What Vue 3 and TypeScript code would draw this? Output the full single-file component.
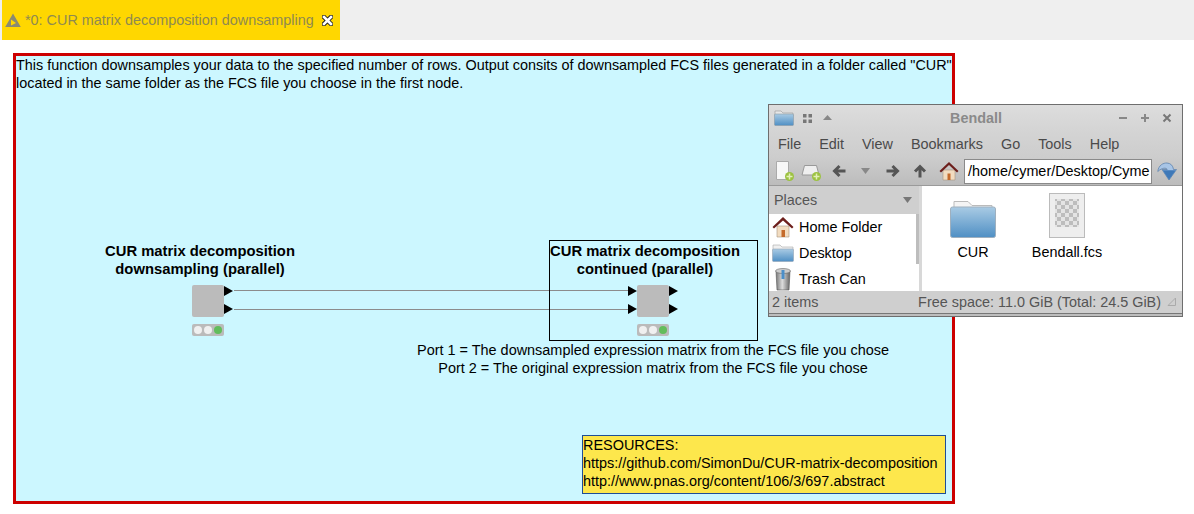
<template>
  <div class="page">
    <div class="tabbar">
      <div class="tab">
        <svg class="tab-icon" width="16" height="14" viewBox="0 0 16 14">
          <path d="M8 .5 15.800 14H.2Z" fill="#8a8a72" />
          <path d="M6 6.500 11 10 6 12.500Z" fill="#ffd700" />
        </svg>
        <span class="tab-title">*0: CUR matrix decomposition downsampling</span>
        <svg class="tab-close" width="11" height="11" viewBox="0 0 11 11">
          <path d="M2 2 9 9M9 2 2 9" stroke="#222" stroke-width="4.500" stroke-linecap="square" />
          <path d="M2 2 9 9M9 2 2 9" stroke="#fff" stroke-width="2.600" stroke-linecap="square" />
        </svg>
      </div>
    </div>

    <div class="canvas">
      <div class="description">
        This function downsamples your data to the specified number of rows. Output consits of downsampled FCS files generated in a folder called "CUR"<br />
        located in the same folder as the FCS file you choose in the first node.
      </div>

      <svg class="wires" width="936" height="445" viewBox="0 0 936 445">
        <path d="M218 234.500H612M218 253.500H612" stroke="#8c8c8c" fill="none" />
      </svg>

      <div class="selection"></div>

      <div class="node-label first">CUR matrix decomposition<br />downsampling (parallel)</div>
      <div class="node-label second">CUR matrix decomposition<br />continued (parallel)</div>

      <div v-for="node in nodes" :key="node.id" class="node" :style="{ left: node.x + 'px', top: node.y + 'px' }">
        <div class="node-box"></div>
        <i v-for="port in node.ports" :key="port.x + '-' + port.y" class="port" :style="{ left: port.x + 'px', top: port.y + 'px' }"></i>
        <div class="lights"><b></b><b></b><b class="on"></b></div>
      </div>

      <div class="ports-note">
        Port 1 = The downsampled expression matrix from the FCS file you chose<br />
        Port 2 = The original expression matrix from the FCS file you chose
      </div>

      <div class="resources">
        RESOURCES:<br />
        https://github.com/SimonDu/CUR-matrix-decomposition<br />
        http://www.pnas.org/content/106/3/697.abstract
      </div>
    </div>

    <div class="window">
      <div class="titlebar">
        <svg class="win-folder" width="20" height="16" viewBox="0 0 20 16">
          <defs>
            <linearGradient id="tbFolder" x1="0" y1="0" x2="0" y2="1">
              <stop offset="0" stop-color="#a9cbe4" />
              <stop offset="1" stop-color="#4f8fc4" />
            </linearGradient>
          </defs>
          <path d="M1 1h6l2 2h10v3H1Z" fill="#e8e8e8" stroke="#999" stroke-width=".6" />
          <rect x="0.500" y="4" width="19" height="11.500" rx="1" fill="url(#tbFolder)" stroke="#8c9aa6" stroke-width=".6" />
        </svg>
        <svg width="9" height="9" viewBox="0 0 9 9" class="win-grip">
          <path d="M0 0h3.500v3.500H0ZM5.500 0H9v3.500H5.500ZM0 5.500h3.500V9H0ZM5.500 5.500H9V9H5.500Z" fill="#777" />
        </svg>
        <svg width="9" height="5" viewBox="0 0 9 5" class="win-up"><path d="M4.500 0 9 5H0Z" fill="#888" /></svg>
        <span class="win-title">Bendall</span>
        <span class="win-btns">
          <svg width="10" height="10" viewBox="0 0 10 10"><path d="M1 5h8" stroke="#888" stroke-width="2" /></svg>
          <svg width="10" height="10" viewBox="0 0 10 10"><path d="M1 5h8M5 1v8" stroke="#888" stroke-width="2" /></svg>
          <svg width="10" height="10" viewBox="0 0 10 10"><path d="M1.500 1.500l7 7M8.500 1.500l-7 7" stroke="#777" stroke-width="2" /></svg>
        </span>
      </div>

      <div class="menubar">
        <span v-for="item in menu" :key="item">{{ item }}</span>
      </div>

      <div class="toolbar">
        <svg width="20" height="22" viewBox="0 0 20 22">
          <path d="M1.500 1.500h12v18h-12Z" fill="#f7f7f7" stroke="#aaa" />
          <circle cx="14.500" cy="16.500" r="4.500" fill="#9cc240" />
          <path d="M14.500 13.500v6M11.500 16.500h6" stroke="#e3f0b8" stroke-width="1.500" />
        </svg>
        <svg width="22" height="22" viewBox="0 0 22 22">
          <path d="M3.500 5.500h12l2.500 9.500h-17Z" fill="#efefef" stroke="#999" />
          <circle cx="15.500" cy="16.500" r="4.500" fill="#9cc240" />
          <path d="M15.500 13.500v6M12.500 16.500h6" stroke="#e3f0b8" stroke-width="1.500" />
        </svg>
        <svg width="14" height="14" viewBox="0 0 14 14"><path d="M7.500 2 2.500 7l5 5M3 7h10.500" fill="none" stroke="#555" stroke-width="3" /></svg>
        <svg width="9" height="6" viewBox="0 0 9 6"><path d="M0 0h9L4.500 6Z" fill="#888" /></svg>
        <svg width="14" height="14" viewBox="0 0 14 14"><path d="M6.500 2l5 5-5 5M11 7H.5" fill="none" stroke="#555" stroke-width="3" /></svg>
        <svg width="14" height="14" viewBox="0 0 14 14"><path d="M2 7.500l5-5 5 5M7 3v10.500" fill="none" stroke="#555" stroke-width="3" /></svg>
        <svg width="20" height="20" viewBox="0 0 20 20">
          <path d="M4 9h12v10H4Z" fill="#f2dcc0" stroke="#a9957c" stroke-width=".6" />
          <path d="M8.500 12.500h3V19h-3Z" fill="#c46a2b" />
          <path d="M0.500 10 10 1l9.500 9-1.500 1.500L10 4l-8 7.500Z" fill="#6d1f1c" />
        </svg>
        <div class="address">/home/cymer/Desktop/Cyme</div>
        <svg class="go-icon" width="20" height="19" viewBox="0 0 20 19">
          <path d="M.8 9.500C1.500 3 6.500.8 10 1c3.500.2 6 2.500 6.500 6.500h3L12 18 5 7.500h5.200C9.500 5.500 5 5.500.8 9.500Z" fill="#a8c5e6" stroke="#5f84ad" stroke-width=".8" />
          <path d="M5.700 8.200h13.100L12 17.800Z" fill="#3f79b8" />
        </svg>
      </div>

      <div class="panes">
        <div class="side">
          <div class="side-head">
            <span>Places</span>
            <svg width="9" height="6" viewBox="0 0 9 6"><path d="M0 0h9L4.500 6Z" fill="#777" /></svg>
          </div>
          <div class="side-list">
            <div class="place">
              <svg width="22" height="22" viewBox="0 0 22 22">
                <path d="M5 10h12v11H5Z" fill="#f2dcc0" stroke="#a9957c" stroke-width=".6" />
                <path d="M9.500 14h3.500v7H9.500Z" fill="#c46a2b" />
                <path d="M0.500 11 11 1l10.500 10L20 12.500 11 4.500 2 12.500Z" fill="#6d1f1c" />
              </svg>
              <span>Home Folder</span>
            </div>
            <div class="place">
              <svg width="22" height="18" viewBox="0 0 22 18">
                <path d="M1 1h7l2 2h11v4H1Z" fill="#f0f0f0" stroke="#aaa" stroke-width=".6" />
                <rect x="0.500" y="5" width="21" height="12.500" rx="1" fill="url(#tbFolder)" stroke="#93a5b5" stroke-width=".6" />
              </svg>
              <span>Desktop</span>
            </div>
            <div class="place">
              <svg width="22" height="24" viewBox="0 0 22 24">
                <defs>
                  <linearGradient id="trash" x1="0" y1="0" x2="1" y2="0">
                    <stop offset="0" stop-color="#777" />
                    <stop offset=".45" stop-color="#ddd" />
                    <stop offset="1" stop-color="#666" />
                  </linearGradient>
                </defs>
                <path d="M4 4h14l-1 19H5Z" fill="url(#trash)" stroke="#555" stroke-width=".6" />
                <ellipse cx="11" cy="4" rx="7.500" ry="2.500" fill="#ccc" stroke="#666" stroke-width=".6" />
                <rect x="9.500" y="3" width="3" height="9" fill="#4c8fc9" />
              </svg>
              <span>Trash Can</span>
            </div>
            <div class="side-scroll"></div>
          </div>
        </div>
        <div class="splitter"></div>
        <div class="files">
          <div class="file">
            <div class="file-icon">
              <svg width="46" height="37" viewBox="0 0 46 37">
                <path d="M4 .5h14l4 4h20v12H4Z" fill="#f4f4f4" stroke="#bbb" />
                <rect x="0.500" y="6" width="45" height="30.500" rx="2" fill="url(#tbFolder)" stroke="#9fb0bf" />
              </svg>
            </div>
            <span>CUR</span>
          </div>
          <div class="file">
            <div class="file-icon">
              <svg width="36" height="45" viewBox="0 0 36 45">
                <defs>
                  <pattern id="check" width="8" height="8" patternUnits="userSpaceOnUse">
                    <rect width="8" height="8" fill="#e4e4e4" />
                    <rect width="4" height="4" fill="#bdbdbd" />
                    <rect x="4" y="4" width="4" height="4" fill="#bdbdbd" />
                  </pattern>
                </defs>
                <rect x="0.500" y="0.500" width="35" height="44" fill="#eeeeee" stroke="#bbb" />
                <rect x="6" y="6" width="24" height="28" fill="url(#check)" />
              </svg>
            </div>
            <span>Bendall.fcs</span>
          </div>
        </div>
      </div>

      <div class="statusbar">
        <span>2 items</span>
        <span class="free">Free space: 11.0 GiB (Total: 24.5 GiB)</span>
        <svg width="9" height="9" viewBox="0 0 9 9"><path d="M8.500 1v7.500H1Z" fill="none" stroke="#aaa" /></svg>
      </div>
      <div class="win-bottom"></div>
    </div>
  </div>
</template>

<script setup lang="ts">
interface Port {
  x: number
  y: number
}

interface WorkflowNode {
  id: string
  x: number
  y: number
  ports: Port[]
}

const menu: string[] = ['File', 'Edit', 'View', 'Bookmarks', 'Go', 'Tools', 'Help']

const nodes: WorkflowNode[] = [
  {
    id: 'downsampling',
    x: 176,
    y: 229,
    ports: [
      { x: 32, y: 1 },
      { x: 32, y: 19 },
    ],
  },
  {
    id: 'continued',
    x: 621,
    y: 229,
    ports: [
      { x: -9, y: 1 },
      { x: -9, y: 19 },
      { x: 32, y: 1 },
      { x: 32, y: 19 },
    ],
  },
]
</script>

<style>
html,
body {
  margin: 0;
  background: #fff;
}
</style>

<style scoped>
.page {
  position: relative;
  width: 1194px;
  height: 514px;
  overflow: hidden;
  background: #fff;
  font-family: "Liberation Sans", Arial, sans-serif;
  color: #000;
}

.tabbar {
  height: 40px;
  background: #efefef;
  padding-left: 2px;
}

.tab {
  width: 338px;
  height: 40px;
  background: #ffd700;
  display: flex;
  align-items: center;
  box-sizing: border-box;
  padding-left: 3px;
}

.tab-title {
  margin-left: 4px;
  font-size: 14.4px;
  color: #8f8a50;
  white-space: nowrap;
}

.tab-close {
  margin-left: 8px;
}

.canvas {
  position: absolute;
  left: 13px;
  top: 53px;
  width: 936px;
  height: 445px;
  border: 3px solid #cc0000;
  background: #ccf7ff;
}

.description {
  position: absolute;
  left: 0;
  top: 0;
  font-size: 14.4px;
  line-height: 18px;
  white-space: nowrap;
}

.wires {
  position: absolute;
  left: 0;
  top: 0;
}

.selection {
  position: absolute;
  left: 533px;
  top: 184px;
  width: 207px;
  height: 99px;
  border: 1px solid #000;
}

.node-label {
  position: absolute;
  width: 220px;
  font-size: 14.8px;
  font-weight: 700;
  line-height: 18px;
  text-align: center;
  white-space: nowrap;
}

.node-label.first {
  left: 74px;
  top: 186px;
}

.node-label.second {
  left: 519px;
  top: 186px;
}

.node {
  position: absolute;
  width: 32px;
  height: 52px;
}

.node-box {
  width: 32px;
  height: 32px;
  border-radius: 2px;
  background: #bbbbbb;
}

.port {
  position: absolute;
  width: 0;
  height: 0;
  border-left: 9px solid #000;
  border-top: 5px solid transparent;
  border-bottom: 5px solid transparent;
}

.lights {
  display: flex;
  align-items: center;
  gap: 2px;
  width: 32px;
  height: 12px;
  margin-top: 7px;
  padding-left: 2px;
  box-sizing: border-box;
  border-radius: 2px;
  background: #bbbbbb;
}

.lights b {
  width: 8px;
  height: 8px;
  border-radius: 50%;
  background: #f0f0f0;
}

.lights b.on {
  background: #62bd5c;
}

.ports-note {
  position: absolute;
  left: 337px;
  top: 285px;
  width: 600px;
  font-size: 14.45px;
  line-height: 18px;
  text-align: center;
  white-space: nowrap;
}

.resources {
  position: absolute;
  left: 566px;
  top: 379px;
  width: 364px;
  height: 59px;
  box-sizing: border-box;
  border: 1px solid #1f4e96;
  background: #fde74c;
  font-size: 14.45px;
  line-height: 18px;
  white-space: nowrap;
}

.window {
  position: absolute;
  left: 768px;
  top: 104px;
  width: 415px;
  height: 213px;
  box-sizing: border-box;
  border: 1px solid #6e6e6e;
  display: flex;
  flex-direction: column;
  background: #cfcfcf;
  color: #4a4a4a;
  font-size: 14.4px;
}

.titlebar {
  height: 26px;
  display: flex;
  align-items: center;
  padding-left: 5px;
  background: linear-gradient(#dddddd, #d4d4d4);
  position: relative;
}

.win-grip {
  margin-left: 9px;
}

.win-up {
  margin-left: 11px;
  margin-bottom: 1px;
}

.win-title {
  position: absolute;
  left: 181px;
  top: 5px;
  font-weight: 700;
  color: #8a8a8a;
}

.win-btns {
  margin-left: auto;
  display: flex;
  gap: 12px;
  margin-right: 10px;
}

.menubar {
  height: 26px;
  display: flex;
  align-items: center;
  gap: 18px;
  padding-left: 9px;
  background: linear-gradient(#d4d4d4, #cdcdcd);
}

.toolbar {
  height: 29px;
  display: flex;
  align-items: center;
  padding-left: 6px;
  background: linear-gradient(#cdcdcd, #bcbcbc);
  border-bottom: 1px solid #9a9a9a;
  box-sizing: border-box;
}

.toolbar svg:nth-child(2) {
  margin-left: 6px;
}

.toolbar svg:nth-child(3) {
  margin-left: 9px;
}

.toolbar svg:nth-child(4) {
  margin-left: 15px;
}

.toolbar svg:nth-child(5) {
  margin-left: 16px;
}

.toolbar svg:nth-child(6) {
  margin-left: 13px;
}

.toolbar svg:nth-child(7) {
  margin-left: 12px;
}

.address {
  width: 188px;
  height: 25px;
  margin-left: 5px;
  box-sizing: border-box;
  border: 1px solid #8a8a8a;
  background: #fff;
  color: #000;
  line-height: 23px;
  padding-left: 3px;
  overflow: hidden;
  white-space: nowrap;
}

.toolbar svg.go-icon {
  margin-left: 5px;
  flex: none;
}

.panes {
  flex: 1;
  display: flex;
  min-height: 0;
  background: #fff;
}

.side {
  width: 150px;
  display: flex;
  flex-direction: column;
  background: #cfcfcf;
}

.side-head {
  height: 28px;
  flex: none;
  display: flex;
  align-items: center;
  justify-content: space-between;
  padding: 0 7px 0 5px;
  color: #555;
}

.side-list {
  position: relative;
  flex: 1;
  background: #fff;
  overflow: hidden;
  color: #000;
}

.place {
  height: 26px;
  display: flex;
  align-items: center;
  gap: 5px;
  padding-left: 3px;
}

.place svg {
  flex: none;
}

.side-scroll {
  position: absolute;
  right: 0;
  top: 0;
  width: 3px;
  height: 50px;
  background: #bdbdbd;
}

.splitter {
  width: 3px;
  background: #d8d8d8;
}

.files {
  flex: 1;
  display: flex;
  gap: 48px;
  padding: 7px 0 0 28px;
  color: #000;
}

.file {
  display: flex;
  flex-direction: column;
  align-items: center;
  width: 46px;
}

.file-icon {
  height: 45px;
  flex: none;
  display: flex;
  align-items: flex-end;
}

.file-icon svg {
  flex: none;
}

.file span {
  margin-top: 6px;
  white-space: nowrap;
}

.statusbar {
  height: 23px;
  flex: none;
  display: flex;
  align-items: center;
  padding: 0 6px 1px 3px;
  box-sizing: border-box;
  background: #cfcfcf;
  color: #555;
  border-bottom: 1px solid #777;
}

.free {
  margin-left: auto;
  margin-right: 6px;
}

.win-bottom {
  height: 2px;
  flex: none;
  background: #bdbdbd;
}
</style>
